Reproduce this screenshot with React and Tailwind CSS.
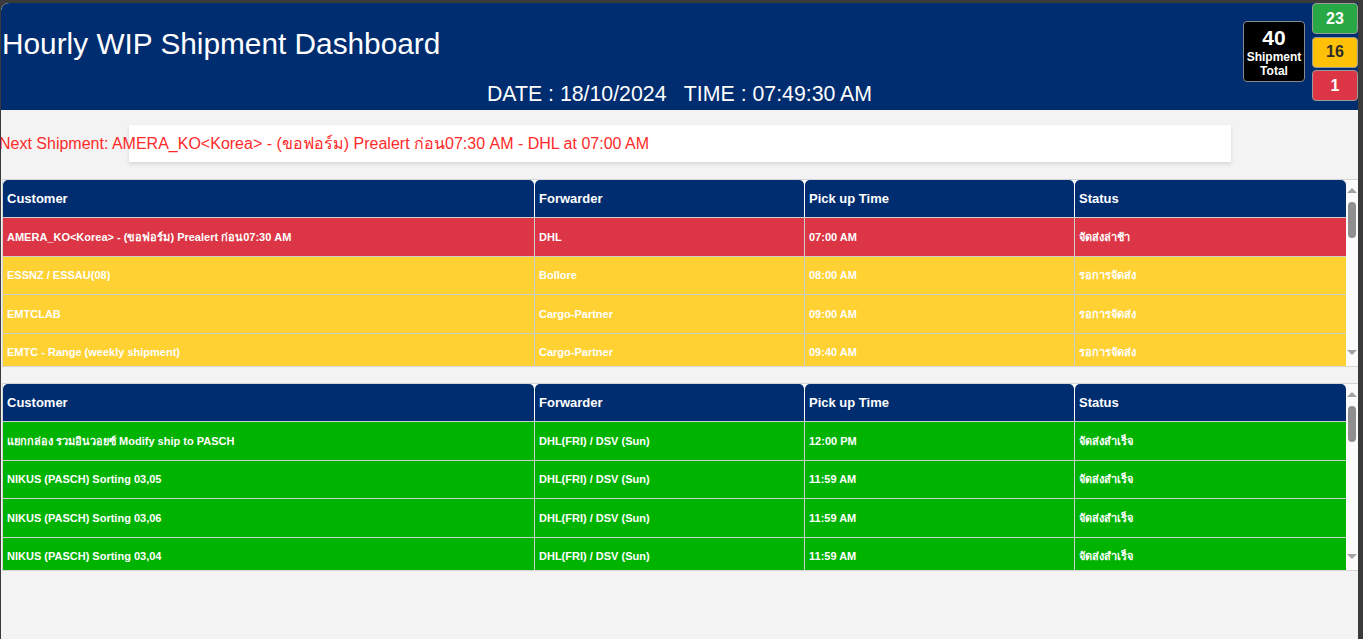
import React from "react";

const FONT = { fontFamily: '"Liberation Sans", Arial, "Noto Sans", "DejaVu Sans", sans-serif' };

const rows1 = [
  { c: "AMERA_KO<Korea> - (ขอฟอร์ม) Prealert ก่อน07:30 AM", f: "DHL", t: "07:00 AM", s: "จัดส่งล่าช้า", bg: "bg-[#dc3545]" },
  { c: "ESSNZ / ESSAU(08)", f: "Bollore", t: "08:00 AM", s: "รอการจัดส่ง", bg: "bg-[#ffd133]" },
  { c: "EMTCLAB", f: "Cargo-Partner", t: "09:00 AM", s: "รอการจัดส่ง", bg: "bg-[#ffd133]" },
  { c: "EMTC - Range (weekly shipment)", f: "Cargo-Partner", t: "09:40 AM", s: "รอการจัดส่ง", bg: "bg-[#ffd133]" },
];

const rows2 = [
  { c: "แยกกล่อง รวมอินวอยซ์ Modify ship to PASCH", f: "DHL(FRI) / DSV (Sun)", t: "12:00 PM", s: "จัดส่งสำเร็จ", bg: "bg-[#00b300]" },
  { c: "NIKUS (PASCH) Sorting 03,05", f: "DHL(FRI) / DSV (Sun)", t: "11:59 AM", s: "จัดส่งสำเร็จ", bg: "bg-[#00b300]" },
  { c: "NIKUS (PASCH) Sorting 03,06", f: "DHL(FRI) / DSV (Sun)", t: "11:59 AM", s: "จัดส่งสำเร็จ", bg: "bg-[#00b300]" },
  { c: "NIKUS (PASCH) Sorting 03,04", f: "DHL(FRI) / DSV (Sun)", t: "11:59 AM", s: "จัดส่งสำเร็จ", bg: "bg-[#00b300]" },
];

function Scrollbar() {
  return (
    <div className="w-[12px] shrink-0 bg-[#fbfbfb] flex flex-col items-center">
      <div className="mt-[8px] w-0 h-0 border-l-[5px] border-r-[5px] border-b-[5px] border-l-transparent border-r-transparent border-b-[#a3a3a3]" />
      <div className="mt-[9px] w-[8px] h-[36px] rounded-full bg-[#8f8f8f]" />
      <div className="flex-1" />
      <div className="mb-[11px] w-0 h-0 border-l-[5px] border-r-[5px] border-t-[5px] border-l-transparent border-r-transparent border-t-[#a3a3a3]" />
    </div>
  );
}

function Table({ rows, className }) {
  const headW = ["w-[531px] mr-[1px]", "w-[269px] mr-[1px]", "w-[269px] mr-[1px]", "w-[271px]"];
  const bodyW = ["w-[532px] border-r", "w-[270px] border-r", "w-[270px] border-r", "w-[271px]"];
  const heads = ["Customer", "Forwarder", "Pick up Time", "Status"];
  return (
    <div className={"ml-[1px] h-[188px] flex border-l border-t border-b border-[#d4d4d4] bg-white overflow-hidden " + className}>
      <div className="w-[1343px] shrink-0 flex flex-col overflow-hidden">
        <div className="flex h-[38px] shrink-0 border-b border-[#cfcfcf] bg-white">
          {heads.map((h, i) => (
            <div
              key={h}
              className={
                headW[i] +
                " shrink-0 h-full bg-[#002d6f] rounded-t-[5px] flex items-center pl-[4px] text-white font-bold text-[13px]"
              }
            >
              {h}
            </div>
          ))}
        </div>
        {rows.map((r, ri) => (
          <div key={ri} className={"flex h-[38.5px] shrink-0 border-b border-[#cfcfcf] " + r.bg}>
            {[r.c, r.f, r.t, r.s].map((v, i) => (
              <div
                key={i}
                className={
                  bodyW[i] +
                  " shrink-0 border-[#cfcfcf] h-full flex items-center pl-[4px] text-white font-bold text-[11px] whitespace-nowrap"
                }
              >
                {v}
              </div>
            ))}
          </div>
        ))}
      </div>
      <Scrollbar />
    </div>
  );
}

export default function App() {
  return (
    <div className="w-full h-[639px] bg-[#3a3a3a] pt-[3px] pl-[1px] pr-[5px] overflow-hidden" style={FONT}>
      <div className="h-full bg-[#f3f3f3] flex flex-col rounded-tl-[8px] overflow-hidden">
        {/* Header */}
        <div className="relative h-[107px] shrink-0 bg-[#002d6f] rounded-tl-[8px]">
          <div className="pt-[24px] pl-[1px] text-[29.8px] leading-[34px] text-white whitespace-nowrap">
            Hourly WIP Shipment Dashboard
          </div>
          <div className="mt-[21px] text-center text-[21.3px] leading-[24px] text-white whitespace-pre">
            {"DATE : 18/10/2024   TIME : 07:49:30 AM"}
          </div>
          {/* total box */}
          <div className="absolute top-[18px] right-[53px] w-[62px] h-[61px] bg-black border border-[#8a8a8a] rounded-[4px] flex flex-col items-center justify-center text-white font-bold">
            <div className="text-[21px] leading-[24px]">40</div>
            <div className="text-[12px] leading-[14px]">Shipment</div>
            <div className="text-[12px] leading-[14px]">Total</div>
          </div>
          {/* status counters */}
          <div className="absolute top-0 right-0 w-[46px] flex flex-col gap-[2.5px]">
            <div className="h-[31px] rounded-[4px] border border-[#9a9a9a] bg-[#28a745] flex items-center justify-center text-white font-bold text-[16px]">23</div>
            <div className="h-[31px] rounded-[4px] border border-[#9a9a9a] bg-[#ffc107] flex items-center justify-center text-[#2b2b2b] font-bold text-[16px]">16</div>
            <div className="h-[31px] rounded-[4px] border border-[#9a9a9a] bg-[#dc3545] flex items-center justify-center text-white font-bold text-[16px]">1</div>
          </div>
        </div>

        {/* Next shipment */}
        <div className="relative h-[69px] shrink-0 pt-[15px]">
          <div className="ml-[128px] w-[1102px] h-[37px] bg-white shadow-[0_2px_4px_rgba(0,0,0,0.12)]" />
          <div className="absolute left-[-2px] top-[25px] text-[16px] leading-[18px] text-[#ff2a2a] whitespace-nowrap">
            Next Shipment: AMERA_KO&lt;Korea&gt; - (ขอฟอร์ม) Prealert ก่อน07:30 AM - DHL at 07:00 AM
          </div>
        </div>

        <Table rows={rows1} className="" />
        <Table rows={rows2} className="mt-[16px]" />
      </div>
    </div>
  );
}
